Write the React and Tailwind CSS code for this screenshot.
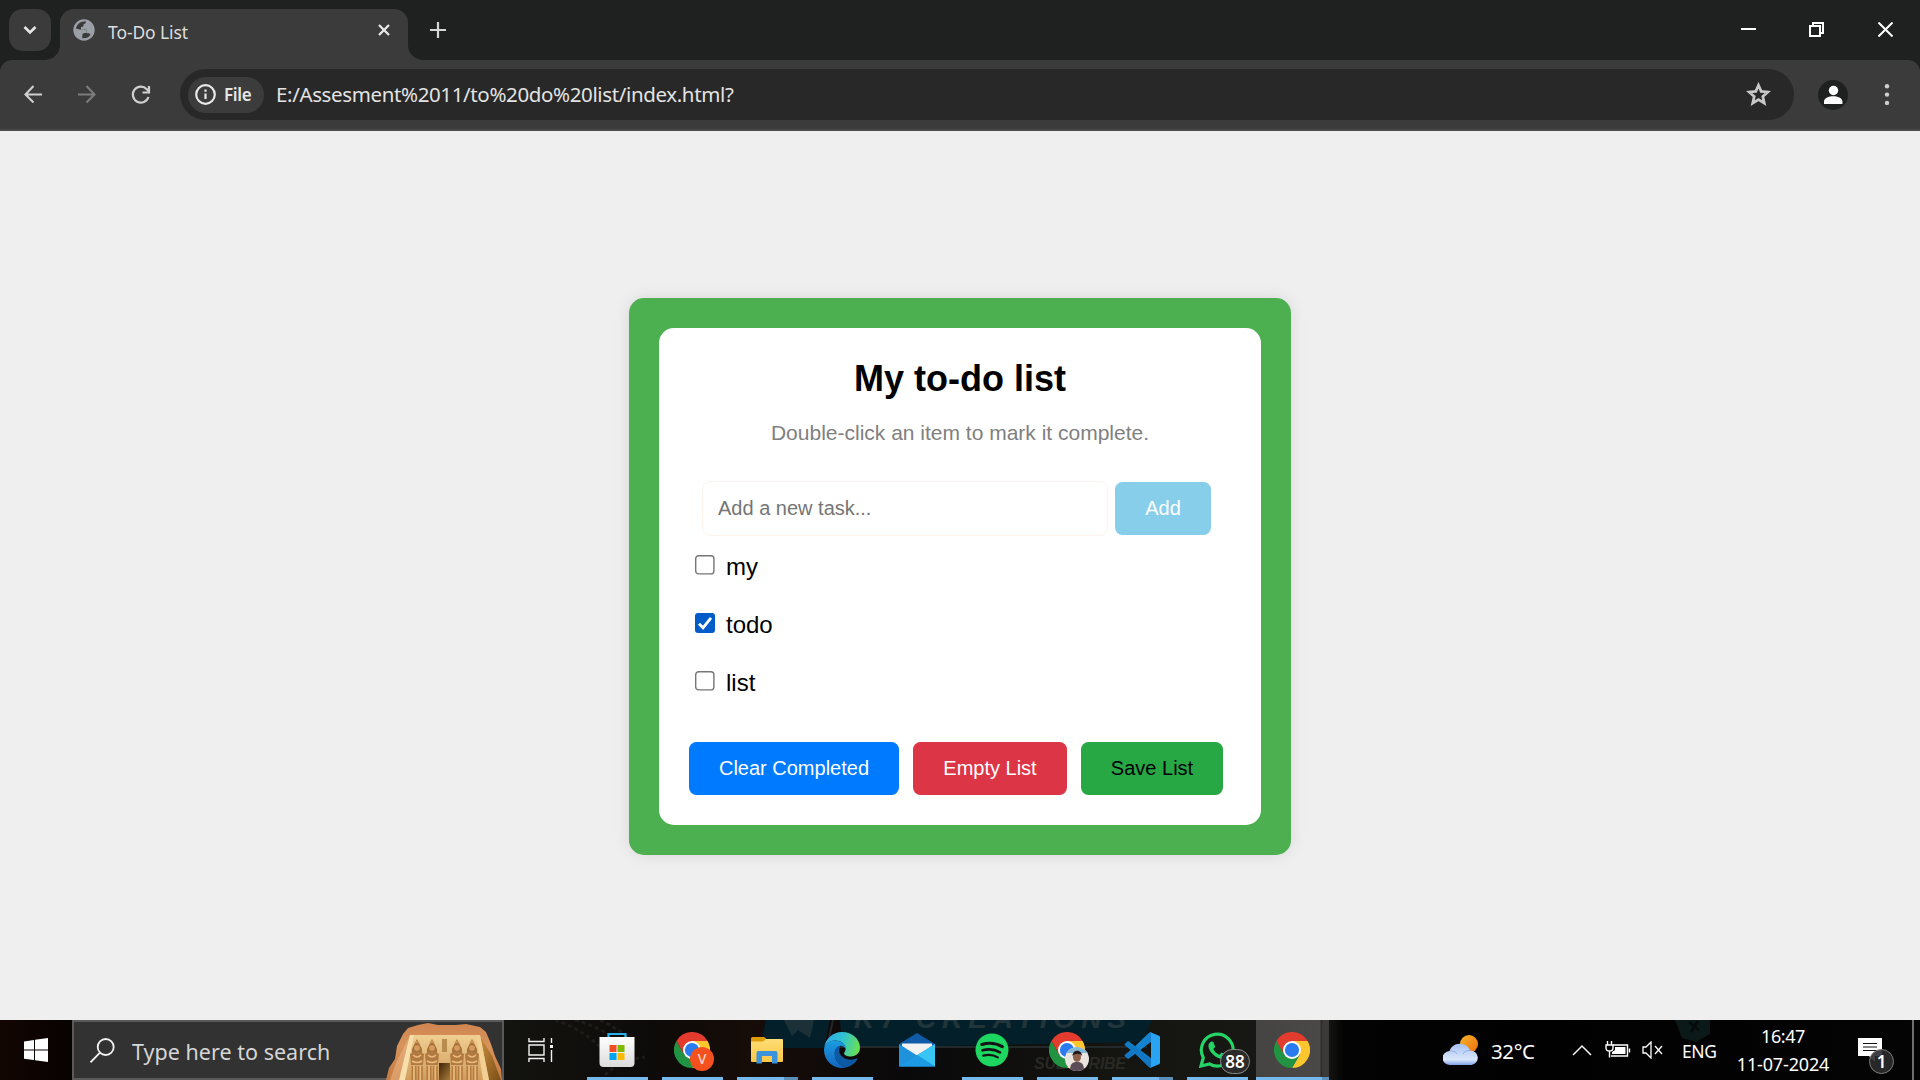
import React from "react";

const UI = "font-['Noto_Sans','Open_Sans',sans-serif]";
const ARIAL = "font-['Liberation_Sans',Arial,sans-serif]";

/* ---------- Browser chrome icons ---------- */

function Globe() {
  return (
    <svg width="22" height="22" viewBox="0 0 22 22">
      <circle cx="11" cy="11" r="10.7" fill="#9aa0a6" />
      <path
        d="M13.4 2.700c-.2 1.200-1.100 2-2.400 2.100-1 .1-1.300.8-1.100 1.800.2 1-.5 1.600-1.500 1.600H7v2.300h5c1.300 0 1.900.8 1.900 1.900v1.900h1.200c1.300 0 2.300.6 2.700 1.400"
        fill="none"
        stroke="#3b3b3b"
        strokeWidth="0"
      />
      <path d="M13 2.600A8.700 8.700 0 0 0 2.700 9.500l4.300 1h4.800c1.300 0 2 .8 2 2l-.1 1.600h-2.200c-1.200 0-2.200 1-2.200 2.200v2.900a8.800 8.800 0 0 0 8.300-3.400c-.4-1-1.300-1.600-2.300-1.600h-1.300v-2c0-1.200-.8-2-2-2H8V7.900h1c1 0 1.700-.6 1.500-1.600-.1-.9.300-1.500 1.100-1.600 1-.1 1.500-1 1.400-2.100z" fill="#3b3b3b" />
    </svg>
  );
}

function Stroke({ w, h, d, color = "#dcdcdc", sw = 2, cap = "butt" }) {
  return (
    <svg width={w} height={h} viewBox={`0 0 ${w} ${h}`} fill="none" stroke={color} strokeWidth={sw} strokeLinecap={cap}>
      <path d={d} />
    </svg>
  );
}

function TabStrip() {
  return (
    <div className="flex h-[60px] items-start bg-[#1f2120]">
      <div className="ml-[9px] mt-[9px] flex h-[42px] w-[42px] items-center justify-center rounded-[14px] bg-[#3b3b3b]">
        <Stroke w={14} h={10} d="M1.500 2l5.500 5.500L12.500 2" color="#e8e8e8" sw={2.6} />
      </div>
      <div className="relative ml-[9px] mt-[9px] flex h-[51px] w-[348px] items-center rounded-t-[14px] bg-[#3b3b3b] pb-[9px] pl-[13px]">
        <svg className="absolute -left-[15px] bottom-0" width="15" height="15">
          <path d="M15 0A15 15 0 0 1 0 15H15z" fill="#3b3b3b" />
        </svg>
        <svg className="absolute -right-[15px] bottom-0" width="15" height="15">
          <path d="M0 0A15 15 0 0 0 15 15H0z" fill="#3b3b3b" />
        </svg>
        <Globe />
        <span className={`${UI} ml-[13px] mt-[3px] text-[17.500px] leading-[24px] tracking-[-0.1px] text-[#dedede]`}>To-Do List</span>
        <span className="ml-auto mr-[18px]">
          <Stroke w={12} h={12} d="M1 1l10 10M11 1L1 11" color="#e8e8e8" sw={2.300} />
        </span>
      </div>
      <div className="ml-[22px] mt-[22px]">
        <Stroke w={16} h={16} d="M8 0v16M0 8h16" color="#d6d6d6" sw={2.200} />
      </div>
      <div className="ml-auto mr-[27px] mt-[22px] flex">
        <Stroke w={15} h={15} d="M0 7h15" color="#fff" />
        <svg className="ml-[53px]" width="15" height="15" fill="none" stroke="#fff" strokeWidth="2">
          <path d="M1 4h10v10H1zM4 4V1h10v10h-3" />
        </svg>
        <svg className="ml-[54px]" width="15" height="15" fill="none" stroke="#fff" strokeWidth="2">
          <path d="M.5.5l14 14M14.500.5l-14 14" />
        </svg>
      </div>
    </div>
  );
}

function Toolbar() {
  return (
    <div className="h-[71px] bg-[#1f2120]">
      <div className="flex h-[71px] items-start rounded-t-[12px] border-b-2 border-[#4a4a4a] bg-[#3b3b3b]">
        <div className="ml-[24px] mt-[25px] flex">
          <Stroke w={18} h={18} d="M18 9.500H2M9.500 1L1.500 9.500L9.500 17.500" color="#cfcfcf" sw={2.100} />
          <span className="ml-[36px]">
            <Stroke w={18} h={18} d="M0 9.500h16M8.500 1l8 8.500l-8 8" color="#7c7c7c" sw={2.100} />
          </span>
          <svg className="ml-[35px]" width="20" height="20" fill="none" stroke="#cfcfcf" strokeWidth="2.200">
            <path d="M17.500 12A8 8 0 1 1 15.800 4.200L17.500 6" />
            <path d="M18 1v6.500h-6.500" />
          </svg>
        </div>
        <div className="ml-[29px] mt-[9px] flex h-[51px] w-[1614px] items-center rounded-full bg-[#282828] pl-[8px]">
          <div className="flex h-[36px] w-[76px] items-center rounded-full bg-[#3c3c3c] pl-[7px]">
            <svg width="21" height="21" fill="none" stroke="#e8e8e8" strokeWidth="2.200">
              <circle cx="10.500" cy="10.500" r="9.300" />
              <path d="M10.500 9.500v5.500M10.500 5.600v2.200" />
            </svg>
            <span className={`${UI} ml-[8px] text-[17px] font-semibold leading-[24px] tracking-[-0.3px] text-[#e6e6e6]`}>File</span>
          </div>
          <span className={`${UI} mb-[2px] ml-[12px] text-[20.500px] leading-[28px] tracking-[-0.37px] text-[#e3e3e3]`}>
            E:/Assesment%2011/to%20do%20list/index.html?
          </span>
          <svg className="mb-[2px] ml-auto mr-[23px]" width="25" height="24" viewBox="0 0 25 24" fill="none" stroke="#c8c8c8" strokeWidth="2.700">
            <path d="M12.500 3.200l2.700 6.200 6.700.6-5.100 4.500 1.500 6.600-5.800-3.500-5.800 3.500 1.500-6.600L3.100 10l6.700-.6z" />
          </svg>
        </div>
        <svg className="ml-[24px] mt-[20px]" width="30" height="30">
          <circle cx="15" cy="15" r="15" fill="#1f2120" />
          <circle cx="15.500" cy="10.500" r="4.700" fill="#fff" />
          <path d="M6 24v-2.500c0-3.500 5-5.300 9.200-5.300s9.200 1.800 9.200 5.300V24z" fill="#fff" />
        </svg>
        <svg className="ml-[36px] mt-[24px]" width="6" height="22" fill="#cfcfcf">
          <circle cx="3" cy="2.300" r="2.200" />
          <circle cx="3" cy="10.600" r="2.200" />
          <circle cx="3" cy="18.900" r="2.200" />
        </svg>
      </div>
    </div>
  );
}

/* ---------- To-do page ---------- */

const tasks = [
  { label: "my", done: false },
  { label: "todo", done: true },
  { label: "list", done: false },
];

function Checkbox({ done }) {
  return done ? (
    <span className="flex h-[19.500px] w-[19.500px] items-center justify-center rounded-[3px] bg-[#005cc8]">
      <svg width="16" height="16" fill="none" stroke="#fff" strokeWidth="2.900">
        <path d="M2 8.800l4 4L14 2.800" />
      </svg>
    </span>
  ) : (
    <svg width="20" height="20" fill="#fff" stroke="#767676" strokeWidth="1.400">
      <rect x=".7" y=".7" width="18.200" height="18.200" rx="3" />
    </svg>
  );
}

function Page() {
  return (
    <main className={`${ARIAL} flex h-[889px] justify-center bg-[#efefef] pt-[167px]`}>
      <div className="h-[557px] w-[662px] rounded-[15px] bg-[#4caf50] p-[30px] shadow-[0_0_16px_rgba(0,0,0,0.1)]">
        <div className="h-[497px] w-[602px] rounded-[15px] bg-white px-[30px] pt-[30px]">
          <h1 className="text-center text-[36px] font-bold leading-[41px] text-black">My to-do list</h1>
          <p className="mt-[22px] text-center text-[21px] leading-[24px] text-[#808080]">Double-click an item to mark it complete.</p>
          <div className="mt-[36px] flex items-center pl-[13px]">
            <div className="flex h-[55px] w-[406px] items-center rounded-[8px] border border-[#fff3ec] pl-[15px] text-[20px] leading-[23px] text-[#757575]">
              Add a new task...
            </div>
            <button className="ml-[7px] h-[53px] w-[96px] rounded-[7.500px] bg-[#87ceeb] text-[20px] leading-[23px] text-white">Add</button>
          </div>
          <ul className="mt-[16px] pl-[6px]">
            {tasks.map((t) => (
              <li key={t.label} className="flex h-[58px] items-start">
                <span className="mt-[3px] h-[20px] w-[20px]">
                  <Checkbox done={t.done} />
                </span>
                <span className="ml-[11px] mt-[1px] text-[24px] leading-[27px] text-black">{t.label}</span>
              </li>
            ))}
          </ul>
          <div className="mt-[16px] flex text-[20px] leading-[23px]">
            <button className="h-[53px] w-[210px] rounded-[7.500px] bg-[#007bff] text-white">Clear Completed</button>
            <button className="ml-[14px] h-[53px] w-[154px] rounded-[7.500px] bg-[#dc3545] text-white">Empty List</button>
            <button className="ml-[14px] h-[53px] w-[142px] rounded-[7.500px] bg-[#28a745] text-black">Save List</button>
          </div>
        </div>
      </div>
    </main>
  );
}

/* ---------- Taskbar icons ---------- */

function Chrome() {
  return (
    <svg width="36" height="36" viewBox="0 0 36 36">
      <path d="M33.600 9A18 18 0 0 1 18 36l7.800-13.500L18 9z" fill="#fcc62d" />
      <path d="M2.400 9A18 18 0 0 0 18 36l7.800-13.500H10.200z" fill="#229342" />
      <path d="M18 9h15.600A18 18 0 0 0 2.400 9l7.800 13.500z" fill="#e33b2e" />
      <circle cx="18" cy="18" r="9" fill="#fff" />
      <circle cx="18" cy="18" r="7.100" fill="#2a7bf0" />
    </svg>
  );
}

function Store() {
  return (
    <svg width="36" height="36" viewBox="0.500 0 36 36">
      <defs>
        <linearGradient id="bag" x1="0" y1="0" x2="0" y2="1">
          <stop offset="0" stopColor="#fff" />
          <stop offset="1" stopColor="#dcdcdc" />
        </linearGradient>
      </defs>
      <path d="M10 6V2h17v4" fill="none" stroke="#27b0ea" strokeWidth="2.200" />
      <path d="M1 5h35v26a4 4 0 0 1-4 4H5a4 4 0 0 1-4-4z" fill="url(#bag)" />
      <path d="M11 13h7v7h-7z" fill="#f25022" />
      <path d="M19 13h7v7h-7z" fill="#7fba00" />
      <path d="M11 21h7v7h-7z" fill="#00a4ef" />
      <path d="M19 21h7v7h-7z" fill="#ffb900" />
    </svg>
  );
}

function Folder() {
  return (
    <svg width="32" height="27" viewBox="0 0 32 27">
      <defs>
        <linearGradient id="fold" x1="0" y1="0" x2="0" y2="1">
          <stop offset="0" stopColor="#ffdd76" />
          <stop offset="1" stopColor="#fbc747" />
        </linearGradient>
      </defs>
      <path d="M0 1.500A1.500 1.500 0 0 1 1.500 0H13l2 1.500V6H0z" fill="#dd9d0b" />
      <path d="M0 4.500h12l3-2.500h16a1 1 0 0 1 1 1v21a1 1 0 0 1-1 1H1a1 1 0 0 1-1-1z" fill="url(#fold)" />
      <path d="M5.500 16a2 2 0 0 1 2-2h17a2 2 0 0 1 2 2v10.500H21V19H11v7.500H5.500z" fill="#3b93dd" />
    </svg>
  );
}

function Edge() {
  return (
    <svg width="36" height="36" viewBox="0 0 36 36">
      <defs>
        <linearGradient id="eTop" x1="0" y1=".3" x2="1" y2=".5">
          <stop offset="0" stopColor="#2fa9e6" />
          <stop offset=".5" stopColor="#30c3d2" />
          <stop offset="1" stopColor="#69e04f" />
        </linearGradient>
        <linearGradient id="eBody" x1="0" y1="0" x2="0" y2="1">
          <stop offset="0" stopColor="#1b9de2" />
          <stop offset="1" stopColor="#1464bd" />
        </linearGradient>
      </defs>
      <path d="M.2 16A18 18 0 0 1 18 0c10.500 0 18 7.500 18 15.500 0 5.500-4 9-9 9-4.200 0-7-1.500-7-3 0-1 1.600-1.700 1.600-4.700 0-4.800-5-8.300-10.600-8.300C5 8.500.8 12.500.2 16z" fill="url(#eTop)" />
      <path d="M0 18C0 12.500 4.500 8.500 11 8.500c6 0 10.600 3.800 10.600 8.300-1-2-3-3-4.800-3-4 0-6 4-6 8 0 7 5.200 12.500 10.700 13.900A18 18 0 0 1 0 18z" fill="url(#eBody)" />
      <path d="M16.800 13.800c-4 0-6.200 4-6.200 8 0 7.500 6 13.500 11 13.800 5-.9 9-3.700 11.700-8.100.5-.9-.2-1.300-.9-.9-1.700.8-3.400 1.100-5.200 1.100-6.500 0-12-4.200-12-9 0-2.200.8-4 1.600-4.900z" fill="#0c59a4" />
    </svg>
  );
}

function Mail() {
  return (
    <svg width="36" height="34" viewBox="0 0 36 34">
      <path d="M0 11L18 0l18 11v6H0z" fill="#0f5ba9" />
      <path d="M3 10.500h30V14L18 23 3 14z" fill="#f2f2f2" />
      <path d="M0 11l18 11.500L36 11v22.500H0z" fill="#1e93dc" />
      <path d="M36 11v22.500L18 22z" fill="#39c5f3" />
      <path d="M0 33.500L18 22l18 11.500z" fill="#1d9ae4" />
    </svg>
  );
}

function Spotify() {
  return (
    <svg width="34" height="34" viewBox="0 0 34 34" fill="none" stroke="#141414" strokeLinecap="round">
      <circle cx="17" cy="17" r="16.500" fill="#1ed760" stroke="none" />
      <path d="M6.800 11.500c7-2 14.500-1.300 20.500 2.200" strokeWidth="3.100" />
      <path d="M7.600 17.300c6-1.700 12.300-1 17.400 2" strokeWidth="2.600" />
      <path d="M8.300 22.600c5.200-1.300 10.300-.8 14.500 1.800" strokeWidth="2.200" />
    </svg>
  );
}

function VSCode() {
  return (
    <svg width="36" height="36" viewBox="0 0 36 36">
      <path d="M1.400 11.300l2-1.800c.5-.4 1.100-.4 1.600 0L27 26.200V35L.9 13.200c-.7-.6-.4-1.200.5-1.900z" fill="#0f7cc6" />
      <path d="M1.400 24.700l2 1.800c.5.400 1.100.4 1.600 0L27 9.800V1L.9 22.800c-.7.600-.4 1.200.5 1.900z" fill="#1278c4" />
      <path d="M11.500 22l4.500-4 11 8.200V36c-.7 0-1.400-.3-2-.8z" fill="#1278c4" />
      <path d="M26 0l9 3.800c.6.300 1 .8 1 1.500v25.400c0 .7-.4 1.200-1 1.500L26 36c1-.8 1-1.200 1-2V2c0-.8 0-1.200-1-2z" fill="#2aa4f2" />
      <path d="M27 0v9.800L16 18l-4.500-4.200L25 .8c.6-.6 1.300-.8 2-.8z" fill="#1583cf" />
    </svg>
  );
}

function WhatsApp() {
  return (
    <svg width="36" height="36" viewBox="0 0 36 36">
      <path d="M2 34l2.300-8.300A15.900 15.900 0 1 1 10.600 32z" fill="none" stroke="#25d366" strokeWidth="3.200" />
      <path d="M12.800 9.500c-.9 0-3.600 1.600-3.300 5 .4 5.500 7.600 12 13 12.400 2.700.2 4.600-1.500 4.600-3.700l-4.400-2.600-2.300 2.200c-2.700-.9-5-3.100-6.100-5.700l1.900-2.100-1.800-5z" fill="#25d366" />
    </svg>
  );
}

function Sculpture() {
  const figures = [31, 46, 71, 86];
  return (
    <svg className="block" width="116" height="57" viewBox="0 0 116 57">
      <defs>
        <linearGradient id="rock" x1="0" y1="0" x2="0" y2="1">
          <stop offset="0" stopColor="#cf8551" />
          <stop offset=".4" stopColor="#d8945c" />
          <stop offset="1" stopColor="#c67a42" />
        </linearGradient>
        <linearGradient id="side" x1="0" y1="0" x2="1" y2="1">
          <stop offset="0" stopColor="#c98f40" />
          <stop offset="1" stopColor="#7a4e16" />
        </linearGradient>
        <linearGradient id="wall" x1="0" y1="0" x2="0" y2="1">
          <stop offset="0" stopColor="#f0cf92" />
          <stop offset="1" stopColor="#d09c5c" />
        </linearGradient>
        <linearGradient id="door" x1="0" y1="0" x2="1" y2="1">
          <stop offset="0" stopColor="#3d2408" />
          <stop offset="1" stopColor="#a87a3c" />
        </linearGradient>
      </defs>
      <path d="M0 57l3-12 6-9 2-13 6-12 5-6 10-3 10-2 10 2h18l10-1 14 3 6 5 5 12 4 12 6 13 1 11H0z" fill="url(#rock)" />
      <path d="M24 12L10 40 4 57h12z" fill="#efbd8a" opacity=".5" />
      <path d="M94 13l12 20 9 24H102z" fill="url(#side)" />
      <path d="M24 12h70l9 45H14z" fill="url(#wall)" />
      <path d="M24 12h4L19 57h-6z" fill="#f7deab" />
      <path d="M90 12h4l9 45h-6z" fill="#f2cf92" />
      <path d="M56 16h5v13h-5z" fill="#b78c4e" />
      <path d="M53 40h11v17H53z" fill="url(#door)" />
      {figures.map((x) => (
        <g key={x}>
          <path d={`M${x - 5} 26l4-8 1-2 1 2 4 8v5h-10z`} fill="#a8743e" />
          <path d={`M${x - 2.5} 19h5`} stroke="#d9a160" strokeWidth="1.500" />
          <circle cx={x} cy="25" r="2.800" fill="#d79b5c" />
          <path d={`M${x - 7} 31q7-5 14 0l-1 11h-12z`} fill="#b07a42" />
          <path d={`M${x - 4} 32q4 4 8 0M${x - 5} 38q5 3 10 0`} stroke="#e9bb79" strokeWidth="1.500" fill="none" />
          <path d={`M${x - 5.5} 43h5v14h-5zM${x + 0.8} 43h5v14h-5z`} fill="#b47a40" />
          <path d={`M${x - 3} 43v14M${x + 3.3} 43v14`} stroke="#e6ba7a" strokeWidth="1.800" />
        </g>
      ))}
    </svg>
  );
}

function Wallpaper() {
  return (
    <svg className="absolute inset-0" width="1920" height="60">
      <defs>
        <linearGradient id="desk" x1="0" y1="0" x2="1" y2="0">
          <stop offset="0" stopColor="#120602" />
          <stop offset=".036" stopColor="#080201" />
          <stop offset=".265" stopColor="#131310" />
          <stop offset=".34" stopColor="#0d0b09" />
          <stop offset=".39" stopColor="#160c08" />
          <stop offset=".47" stopColor="#0a090a" />
          <stop offset=".58" stopColor="#141410" />
          <stop offset=".69" stopColor="#191917" />
          <stop offset=".7" stopColor="#030303" />
          <stop offset=".8" stopColor="#020102" />
          <stop offset="1" stopColor="#040405" />
        </linearGradient>
      </defs>
      <rect width="1920" height="60" fill="url(#desk)" />
      <path d="M555 0q30 10 50 32M575 0q30 8 50 28M600 0q20 10 35 22M605 55q15-15 40-18" stroke="#1c1c18" strokeWidth="3" fill="none" strokeDasharray="4 3" />
      <path d="M766 0h64l-6 28h-64zM840 0h312l-10 22-300 6z" fill="#03202a" />
      <path d="M784 0h30l-4 18-12-8-6 6z" fill="#1c3038" />
      <path d="M833 0l-6 27h320" stroke="#23282a" strokeWidth="2" fill="none" />
      <g className="font-['Liberation_Sans',sans-serif]" fill="#22353a" fontWeight="bold" fontStyle="italic">
        <text x="854" y="7.500" fontSize="28" textLength="42">K7</text>
        <text x="916" y="7.500" fontSize="28" textLength="210">CREATIONS</text>
        <text x="1034" y="49" fontSize="16" textLength="92" fill="#292824">SUBSCRIBE</text>
      </g>
      <path d="M1675 0h35v14l-14 8-14-4z" fill="#0b1918" />
      <path d="M1689 2l10 8M1698 1l-7 11" stroke="#050a0a" strokeWidth="2.500" />
    </svg>
  );
}

function Cell({ children, line, split, active, badge }) {
  return (
    <div className={`relative flex h-[60px] w-[75px] items-center justify-center ${active ? "bg-[linear-gradient(90deg,transparent_2px,#454442_2px,#4a4947_66px,#2b2b2a_67px,#3b3a39_69px)]" : ""}`}>
      {children}
      {badge}
      {line && (
        <div className={`absolute bottom-0 flex h-[3px] bg-[#76b9ed] ${active ? "left-[2px] right-0" : "left-[8px] w-[61px]"}`}>
          {split && <div className={`ml-auto h-full bg-[#5a8fb9] ${active ? "w-[7px]" : "w-[14px]"}`} />}
        </div>
      )}
    </div>
  );
}

function Taskbar() {
  return (
    <footer className={`${UI} relative h-[60px] overflow-hidden bg-black text-white`}>
      <Wallpaper />
      <div className="relative flex h-[60px]">
        <div className="flex w-[72px] items-center justify-center">
          <svg width="24" height="24" fill="#fff">
            <path d="M0 3.400L10 2v9.500H0zM11 1.800L24 0v11.500H11zM0 12.500h10V22L0 20.700zM11 12.500h13V24l-13-1.800z" />
          </svg>
        </div>
        <div className="flex h-[60px] w-[432px] items-center border-2 border-[#5a5a5a] bg-[#323232] pl-[16px]">
          <svg width="25" height="25" fill="none" stroke="#f2f2f2" strokeWidth="1.800">
            <circle cx="15.700" cy="9" r="8" />
            <path d="M10 14.700L.5 24.300" />
          </svg>
          <span className="ml-[17px] mt-[4px] whitespace-nowrap text-[21.500px] leading-[30px] tracking-[0.020px] text-[#d6d6d6]">Type here to search</span>
          <span className="-mb-[2px] ml-auto self-end">
            <Sculpture />
          </span>
        </div>
        <Cell>
          <svg className="mr-[2px]" width="26" height="24" fill="none" stroke="#f2f2f2" strokeWidth="1.400">
            <path d="M1 0v3.500h15V0M1 24v-3.500h15V24M1 7h15v10H1zM23.500 0v5M23.500 12v12" />
            <path d="M22 7h3v3h-3z" fill="#f2f2f2" stroke="none" />
          </svg>
        </Cell>
        <Cell line><Store /></Cell>
        <Cell
          line
          badge={
            <div className="absolute left-[36px] top-[27px] flex h-[24px] w-[24px] items-center justify-center rounded-full bg-[#f4511e] text-[14px] font-medium leading-none text-[#fbd5c8]">V</div>
          }
        >
          <Chrome />
        </Cell>
        <Cell line split><Folder /></Cell>
        <Cell line><Edge /></Cell>
        <Cell><Mail /></Cell>
        <Cell line><Spotify /></Cell>
        <Cell
          line
          badge={
            <svg className="absolute left-[36px] top-[27px]" width="24" height="24" viewBox="0 0 24 24">
              <defs>
                <clipPath id="face"><circle cx="12" cy="12" r="12" /></clipPath>
              </defs>
              <g clipPath="url(#face)">
                <rect width="24" height="24" fill="#e9e4dd" />
                <rect width="24" height="6" fill="#86b9d6" />
                <path d="M5 24c0-7 2-9 7-9s7 2 7 9z" fill="#5c4c58" />
                <ellipse cx="12" cy="10" rx="4" ry="5" fill="#8d604c" />
                <path d="M7.500 9c0-7 9.500-7 9.500 0-2-3-7-3-9.500 0z" fill="#1f1a1c" />
              </g>
            </svg>
          }
        >
          <Chrome />
        </Cell>
        <Cell line split><VSCode /></Cell>
        <Cell
          line
          badge={
            <div className="absolute left-[41px] top-[29px] flex h-[25px] w-[30px] items-center justify-center rounded-full border border-[#8a8a8a] bg-[#2a2a2a] text-[17px] font-semibold leading-none">88</div>
          }
        >
          <WhatsApp />
        </Cell>
        <Cell line split active><Chrome /></Cell>

        <div className="ml-[114px] flex items-center">
          <svg width="36" height="31" viewBox="0 0 36 31">
            <defs>
              <linearGradient id="sun" x1="0" y1="0" x2="1" y2="1">
                <stop offset="0" stopColor="#f5b52a" />
                <stop offset="1" stopColor="#ef6c0f" />
              </linearGradient>
              <linearGradient id="cloud" x1="0" y1="0" x2="0" y2="1">
                <stop offset="0" stopColor="#a5c2f5" />
                <stop offset=".75" stopColor="#dbe7fb" />
                <stop offset="1" stopColor="#7ea2e8" />
              </linearGradient>
            </defs>
            <circle cx="26" cy="9" r="9" fill="url(#sun)" />
            <path d="M7.500 30a7.500 7 0 0 1-1-14A11 11 0 0 1 27 15.500a7.500 7.300 0 0 1 1.500 14.500z" fill="url(#cloud)" />
            <path d="M7 16.200c3-.7 6 .5 7.500 3M20 19c1.500-2.500 4-3.800 7-3.500" stroke="#8fb0ee" strokeWidth="1" fill="none" />
          </svg>
          <span className="ml-[12px] mt-[2px] w-[46px] whitespace-nowrap text-[20.500px] leading-[28px] tracking-[-0.4px]">32°C</span>
        </div>
        <div className="ml-[35px] flex items-center">
          <Stroke w={20} h={12} d="M1 11l9-9l9 9" color="#f2f2f2" sw={1.500} />
          <svg className="ml-[13px]" width="26" height="18" viewBox="0 0 26 18" fill="none" stroke="#fff" strokeWidth="1.400">
            <path d="M8 4h14.500v11H6M24.500 7.500v4" />
            <path d="M10 6h10.500v7H7v-2l3-2z" fill="#fff" stroke="none" />
            <path d="M2.500 0v4M6.500 0v4M1 4h7v3a3.500 3 0 0 1-7 0zM4.500 10v6.500" />
          </svg>
          <svg className="ml-[11px]" width="22" height="18" viewBox="0 0 22 18" fill="none" stroke="#fff" strokeWidth="1.300">
            <path d="M1 6h3l5-5v16l-5-5H1zM13 5l7 8M20 5l-7 8" />
          </svg>
          <span className="ml-[18px] mt-[1px] w-[35px] text-[17.500px] leading-[24px] tracking-[-0.4px]">ENG</span>
        </div>
        <div className="ml-[12px] flex w-[108px] flex-col items-center whitespace-nowrap text-[18px] leading-[28px] tracking-[-0.15px]">
          <span className="mt-[2px] tracking-[-0.4px]">16:47</span>
          <span>11-07-2024</span>
        </div>
        <div className="relative ml-[21px] w-[48px]">
          <svg className="mt-[18px]" width="24" height="24" fill="#fff">
            <path d="M0 0h24v18H17v6l-6-6H0z" />
            <path d="M5 5.500h14M5 9h14M5 12.500h14" stroke="#111" strokeWidth="1.200" />
          </svg>
          <div className="absolute left-[11px] top-[29px] flex h-[25px] w-[25px] items-center justify-center rounded-full border border-[#7c7c7c] bg-[#2b2b2b]/90 text-[17px] font-semibold leading-none">1</div>
        </div>
        <div className="ml-auto mr-[6px] h-[60px] w-[2px] bg-[#6f6f6f]" />
      </div>
    </footer>
  );
}

export default function App() {
  return (
    <div className="flex h-[1080px] w-[1920px] flex-col overflow-hidden">
      <TabStrip />
      <Toolbar />
      <Page />
      <Taskbar />
    </div>
  );
}
